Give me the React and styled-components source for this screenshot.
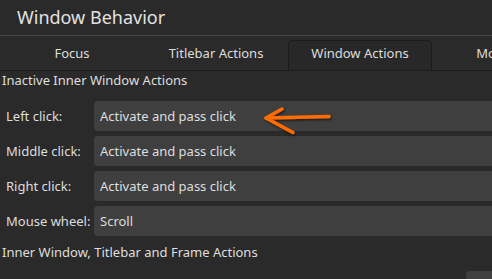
import React from "react";
import styled, { createGlobalStyle, css } from "styled-components";

const GlobalStyle = createGlobalStyle`
  html, body {
    margin: 0;
    padding: 0;
    background: #2a2a2a;
    overflow: hidden;
  }
  body {
    font-family: "Noto Sans", "Open Sans", sans-serif;
    color: #dedede;
  }
`;

const Page = styled.div`
  position: relative;
  width: 492px;
  height: 279px;
  overflow: hidden;
  background: #2a2a2a;
`;

const Header = styled.div`
  height: 36px;
  display: flex;
  align-items: center;
  padding-left: 17px;
  font-size: 18px;
  color: #e2e2e2;
  border-bottom: 1px solid #484848;
  box-sizing: border-box;
  padding-bottom: 2px;
`;

const TabBar = styled.div`
  display: flex;
  height: 34px;
  box-sizing: border-box;
  margin-top: 1px;
  border-bottom: 1px solid #1c1c1c;
  white-space: nowrap;
`;

const Tab = styled.div`
  flex: 0 0 144px;
  box-sizing: border-box;
  display: flex;
  align-items: center;
  justify-content: center;
  font-size: 13px;
  padding-bottom: 2px;
  padding-left: ${({ shift }) => shift || 0}px;
  ${({ active }) =>
    active &&
    css`
      margin-top: 3px;
      padding-bottom: 5px;
      background: #282828;
      border: 1px solid #1c1c1c;
      border-bottom: none;
      border-radius: 5px 5px 0 0;
    `}
`;

const Section = styled.div`
  padding-left: 2px;
`;

const SectionTitle = styled.div`
  font-size: 13px;
  line-height: 18px;
  height: 18px;
`;

const Form = styled.div`
  display: grid;
  grid-template-columns: 88px 420px;
  row-gap: 5px;
  padding: 12px 0 0 4px;
`;

const Label = styled.div`
  font-size: 13px;
  display: flex;
  align-items: center;
  height: 30px;
  padding-bottom: 1px;
  box-sizing: border-box;
`;

const Combo = styled.div`
  height: 30px;
  background: #3f3f3f;
  border-radius: 4px;
  font-size: 13px;
  display: flex;
  align-items: center;
  padding-left: 6px;
  padding-bottom: 1px;
  box-sizing: border-box;
`;

const LowerTitle = styled(SectionTitle)`
  margin-top: 7px;
`;

const LowerRow = styled.div`
  display: flex;
  justify-content: flex-end;
  gap: 10px;
  margin-top: 10px;
  margin-right: -40px;
`;

const LowerLabel = styled(Label)`
  align-items: flex-start;
  padding-top: 7px;
`;

const LowerCombo = styled(Combo)`
  width: 66px;
`;

const Arrow = styled.svg`
  position: absolute;
  left: 258px;
  top: 100px;
  overflow: visible;
`;

const rows = [
  ["Left click:", "Activate and pass click"],
  ["Middle click:", "Activate and pass click"],
  ["Right click:", "Activate and pass click"],
  ["Mouse wheel:", "Scroll"],
];

export default function App() {
  return (
    <Page>
      <GlobalStyle />
      <Header>Window Behavior</Header>
      <TabBar>
        <Tab>Focus</Tab>
        <Tab>Titlebar Actions</Tab>
        <Tab active>Window Actions</Tab>
        <Tab shift={10}>Movement</Tab>
      </TabBar>
      <Section>
        <SectionTitle>Inactive Inner Window Actions</SectionTitle>
        <Form>
          {rows.map(([label, value]) => (
            <React.Fragment key={label}>
              <Label>{label}</Label>
              <Combo>{value}</Combo>
            </React.Fragment>
          ))}
        </Form>
        <LowerTitle>Inner Window, Titlebar and Frame Actions</LowerTitle>
        <LowerRow>
          <LowerLabel>Modifier key:</LowerLabel>
          <LowerCombo>Meta</LowerCombo>
        </LowerRow>
      </Section>
      <Arrow width="80" height="40" viewBox="0 0 80 40">
        <defs>
          <filter id="sh" x="-20%" y="-50%" width="140%" height="200%">
            <feDropShadow dx="1" dy="1.5" stdDeviation="1.2" floodColor="#000" floodOpacity="0.6" />
          </filter>
        </defs>
        <g
          fill="none"
          stroke="#ff6c00"
          strokeWidth="3.5"
          strokeLinecap="round"
          strokeLinejoin="round"
          filter="url(#sh)"
        >
          <path d="M71 16.5 L8 18" />
          <path d="M24 9 L8 18 L35 32.5" />
        </g>
      </Arrow>
    </Page>
  );
}
